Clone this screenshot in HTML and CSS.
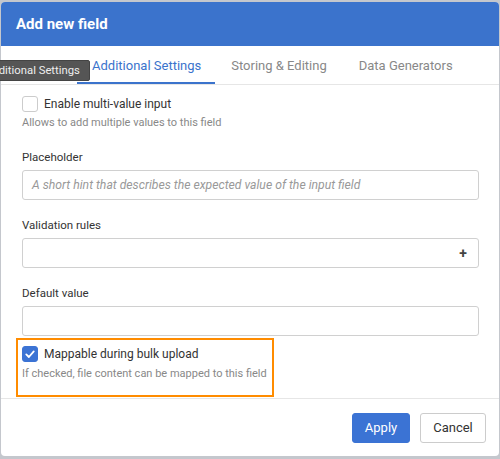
FILE: index.html
```html
<!DOCTYPE html>
<html>
<head>
<meta charset="utf-8">
<link rel="stylesheet" href="styles.css">
</head>
<body>
<div class="modal">
  <div class="modal-header">Add new field</div>
  <div class="tabs">
    <div class="tab first"></div>
    <div class="tab active">Additional Settings</div>
    <div class="tab">Storing &amp; Editing</div>
    <div class="tab">Data Generators</div>
  </div>
  <div class="modal-body">
    <div class="check-group">
      <label class="check-row"><span class="checkbox"></span><span class="check-label">Enable multi-value input</span></label>
      <div class="help">Allows to add multiple values to this field</div>
    </div>
    <div class="field field-first">
      <div class="field-label">Placeholder</div>
      <div class="input"><span class="ph">A short hint that describes the expected value of the input field</span></div>
    </div>
    <div class="field">
      <div class="field-label">Validation rules</div>
      <div class="input input-plus"><span class="plus">+</span></div>
    </div>
    <div class="field">
      <div class="field-label">Default value</div>
      <div class="input"></div>
    </div>
    <div class="check-group highlight">
      <label class="check-row"><span class="checkbox checked"><svg viewBox="0 0 16 16" width="12" height="12"><path d="M3 8.5 L6.5 12 L13 4.5" fill="none" stroke="#fff" stroke-width="2.4" stroke-linecap="round" stroke-linejoin="round"/></svg></span><span class="check-label">Mappable during bulk upload</span></label>
      <div class="help">If checked, file content can be mapped to this field</div>
    </div>
  </div>
  <div class="modal-footer">
    <button class="btn btn-primary">Apply</button>
    <button class="btn btn-default">Cancel</button>
  </div>
  <div class="tooltip">Additional Settings</div>
</div>
</body>
</html>
```
FILE: styles.css
```css
html, body {
  margin: 0;
  padding: 0;
}
body {
  background: #c4c7cd;
  font-family: Roboto, "Liberation Sans", sans-serif;
  padding: 2px 1px 3px 1px;
  overflow: hidden;
}
.modal {
  position: relative;
  background: #fff;
  border-radius: 4px;
  height: 454px;
  display: flex;
  flex-direction: column;
}
.modal-header {
  background: #3b73cc;
  color: #fff;
  font-weight: bold;
  font-size: 15px;
  height: 44px;
  line-height: 45px;
  padding-left: 15px;
  border-radius: 4px 4px 0 0;
  flex: none;
}
.tabs {
  display: flex;
  height: 38px;
  border-bottom: 1px solid #e6e6e6;
  flex: none;
}
.tab {
  font-size: 13px;
  color: #888;
  height: 38px;
  box-sizing: border-box;
  padding: 12px 16px 0 16px;
  line-height: 15px;
}
.tab.first {
  width: 76px;
  padding: 0;
}
.tab.active {
  color: #3b73cc;
  border-bottom: 2px solid #3b73cc;
  padding: 12px 14px 0 15px;
}
.modal-body {
  flex: 1;
  padding: 11px 20px 0 21px;
}
.check-row {
  display: flex;
  align-items: center;
  height: 16px;
}
.checkbox {
  width: 14px;
  height: 14px;
  border: 1px solid #ccc;
  border-radius: 3px;
  background: #fff;
  display: flex;
  align-items: center;
  justify-content: center;
  flex: none;
}
.checkbox.checked {
  background: #3b73d4;
  border-color: #3b73d4;
}
.check-label {
  font-size: 12px;
  color: #333;
  margin-left: 6px;
}
.help {
  font-size: 11px;
  color: #888;
  margin-top: 4px;
}
.field {
  margin-top: 18px;
}
.field.field-first {
  margin-top: 21px;
}
.field-label {
  font-size: 11.5px;
  color: #333;
  margin-bottom: 6px;
}
.input {
  height: 28px;
  border: 1px solid #d0d0d0;
  border-radius: 3px;
  display: flex;
  align-items: center;
  padding: 0 9px;
}
.ph {
  font-size: 12.2px;
  font-style: italic;
  color: #999;
}
.input-plus {
  justify-content: flex-end;
  padding-right: 11px;
}
.plus {
  font-weight: bold;
  font-size: 14px;
  color: #444;
}
.highlight {
  margin: 2px 0 0 -6px;
  width: 258px;
  height: 59px;
  border: 2px solid #ff8c00;
  padding: 6px 0 0 4px;
  box-sizing: border-box;
}
.highlight .help {
  margin-top: 4.5px;
}
.modal-footer {
  border-top: 1px solid #e6e6e6;
  height: 57px;
  display: flex;
  justify-content: flex-end;
  align-items: center;
  gap: 10px;
  padding-right: 13px;
  flex: none;
}
.btn {
  font-family: Roboto, "Liberation Sans", sans-serif;
  font-size: 13px;
  height: 30px;
  border-radius: 3px;
  padding: 0;
  cursor: pointer;
}
.btn-primary {
  background: #3b73d4;
  color: #fff;
  border: 1px solid #3b73d4;
  width: 58px;
}
.btn-default {
  background: #fff;
  color: #333;
  border: 1px solid #ccc;
  width: 66px;
}
.tooltip {
  position: absolute;
  left: -25px;
  top: 58px;
  background: #555;
  color: #eee;
  font-size: 11.3px;
  padding: 3px 9px 3px 8px;
  border: 1px solid #444;
  border-radius: 2px;
  line-height: 13px;
}
```
